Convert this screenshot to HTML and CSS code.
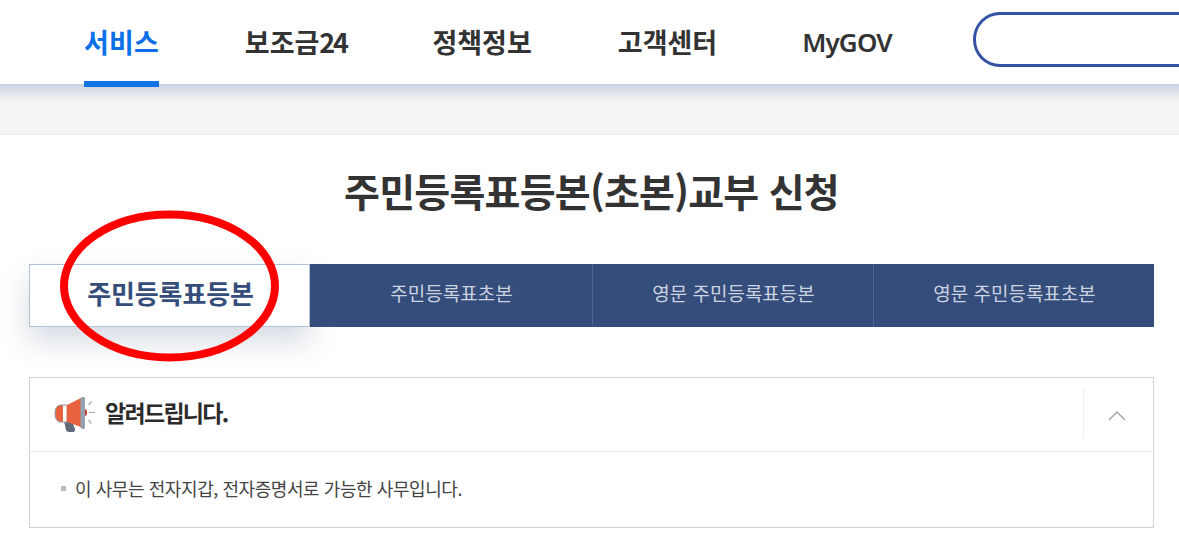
FILE: index.html
```html
<!DOCTYPE html>
<html lang="ko">
<head>
<meta charset="utf-8">
<title>주민등록표등본(초본)교부 신청</title>
<link rel="stylesheet" href="styles.css">
</head>
<body>
<header class="top">
  <nav class="nav">
    <a class="nav-item active">서비스</a>
    <a class="nav-item i2">보조금<span class="num">24</span></a>
    <a class="nav-item i3">정책정보</a>
    <a class="nav-item i4">고객센터</a>
    <a class="nav-item i5">MyGOV</a>
  </nav>
  <div class="search"></div>
</header>
<div class="band"></div>
<main class="main">
  <h1 class="title">주민등록표등본(초본)교부 신청</h1>
  <div class="tabs">
    <a class="tab current">주민등록표등본</a>
    <a class="tab">주민등록표초본</a>
    <a class="tab">영문 주민등록표등본</a>
    <a class="tab">영문 주민등록표초본</a>
    <svg class="circle" width="230" height="162" viewBox="0 0 230 162"><ellipse cx="114.500" cy="81" rx="105.500" ry="71.500" fill="none" stroke="#ff0000" stroke-width="8"/></svg>
  </div>
  <section class="notice">
    <div class="notice-head">
      <svg class="mega" width="42" height="38" viewBox="0 0 42 38">
        <path d="M10 27h8l3 8c.5 1.600-.4 3-2 3h-4c-1.500 0-2.500-.7-3-2z" fill="#5f6b7a"/>
        <path d="M7 11h6v17H7c-4 0-6-3.500-6-8.500S3 11 7 11z" fill="#e8623f" stroke="#8d97a5"/>
        <rect x="9" y="11.500" width="3.500" height="16" fill="#fff"/>
        <path d="M13 11 L27 4 V33 L13 28z" fill="#e8623f"/>
        <path d="M26.500 4.200l1.500-1.200h1.500c.8 0 1.500.6 1.500 1.500v29c0 .9-.7 1.500-1.500 1.500H28l-1.500-1.200z" fill="#98a2ae"/>
        <path d="M31 15c2.500.6 3 6 0 7z" fill="#c0392b"/>
        <path d="M34.500 11l3-3.500M35 18.500h6M34.500 26l3 3.500" stroke="#a4acb6" stroke-width="1.200" fill="none"/>
      </svg>
      <h2 class="notice-title">알려드립니다.</h2>
      <div class="toggle">
        <svg width="18" height="11" viewBox="0 0 18 11"><path d="M1 10l8-8 8 8" fill="none" stroke="#a3a8ae" stroke-width="1.500"/></svg>
      </div>
    </div>
    <div class="notice-body">
      <span class="bullet"></span>
      <p class="notice-text">이 사무는 전자지갑, 전자증명서로 가능한 사무입니다.</p>
    </div>
  </section>
</main>
</body>
</html>
```
FILE: styles.css
```css
* { box-sizing: border-box; }
html, body { margin: 0; padding: 0; overflow: hidden; height: 547px; background: #fff; }
body { font-family: "Noto Sans CJK KR", "Noto Sans", sans-serif; color: #333; }
.top { height: 84px; display: flex; background: #fff; position: relative; z-index: 2; width: 1179px; }
.nav { display: flex; padding-left: 84px; width: 973px; flex: none; }
.nav-item { height: 87px; font-size: 27px; font-weight: 700; line-height: 84px; border-bottom: 0 solid #1273e6; color: #333; white-space: nowrap; }
.nav-item.active { color: #0b6fe8; border-bottom-width: 6px; letter-spacing: .1px; }
.num { letter-spacing: -2.400px; }
.i2 { margin-left: 86px; }
.i3 { margin-left: 86px; }
.i4 { margin-left: 86px; }
.i5 { margin-left: 85px; font-family: "Noto Sans", sans-serif; font-size: 26px; font-weight: 600; letter-spacing: -.85px; }
.search { width: 206px; height: 55px; margin-top: 12px; flex: none; border: 3px solid #3352a5; border-right: 0; border-radius: 27px 0 0 27px; }
.band { height: 51px; background: linear-gradient(#c9d1df 0, #e6e7ec 10px, #f5f3f4 18px); border-bottom: 1px solid #ebebeb; }
.main { padding: 0 25px 0 29px; }
.title { margin: 26px 0 0; height: 60px; line-height: 58px; font-size: 39px; font-weight: 700; text-align: center; letter-spacing: -.75px; color: #333; }
.tabs { display: flex; margin-top: 43px; height: 63px; position: relative; }
.tab { flex: 1; display: flex; align-items: center; justify-content: center; padding: 0 0 6px 1px; background: #344d7a; color: #ccd3e0; font-size: 19px; letter-spacing: 0; border-left: 1px solid #4d6490; }
.tab.current { flex: none; width: 281px; padding-left: 2px; background: #fff; border: 1px solid #b3c0d9; color: #344d7a; font-size: 26px; font-weight: 700; box-shadow: 0 14px 30px rgba(60, 80, 120, .22); letter-spacing: -.1px; }
.tab:nth-child(2) { border-left: 0; flex: none; width: 282px; }
.circle { position: absolute; left: 26px; top: -59px; }
.notice { margin-top: 50px; height: 151px; border: 1px solid #d2d2d2; background: #fff; }
.notice-head { height: 74px; display: flex; align-items: center; padding-left: 24px; border-bottom: 1px solid #ececec; }
.mega { flex: none; margin-top: -3px; }
.notice-title { margin: -6px 0 0 9px; font-size: 23px; font-weight: 700; letter-spacing: -1.700px; color: #2b2b2b; flex: 1; }
.toggle { flex: none; width: 70px; height: 50px; margin-top: -2px; padding: 4px 4px 0 0; border-left: 1px solid #eee; display: flex; align-items: center; justify-content: center; }
.notice-body { display: flex; align-items: center; padding: 24px 0 0 31px; }
.bullet { width: 5px; height: 5px; background: #bbb; flex: none; }
.notice-text { margin: 0 0 0 9px; font-size: 18px; line-height: 24px; color: #444; letter-spacing: -.43px; }
```
